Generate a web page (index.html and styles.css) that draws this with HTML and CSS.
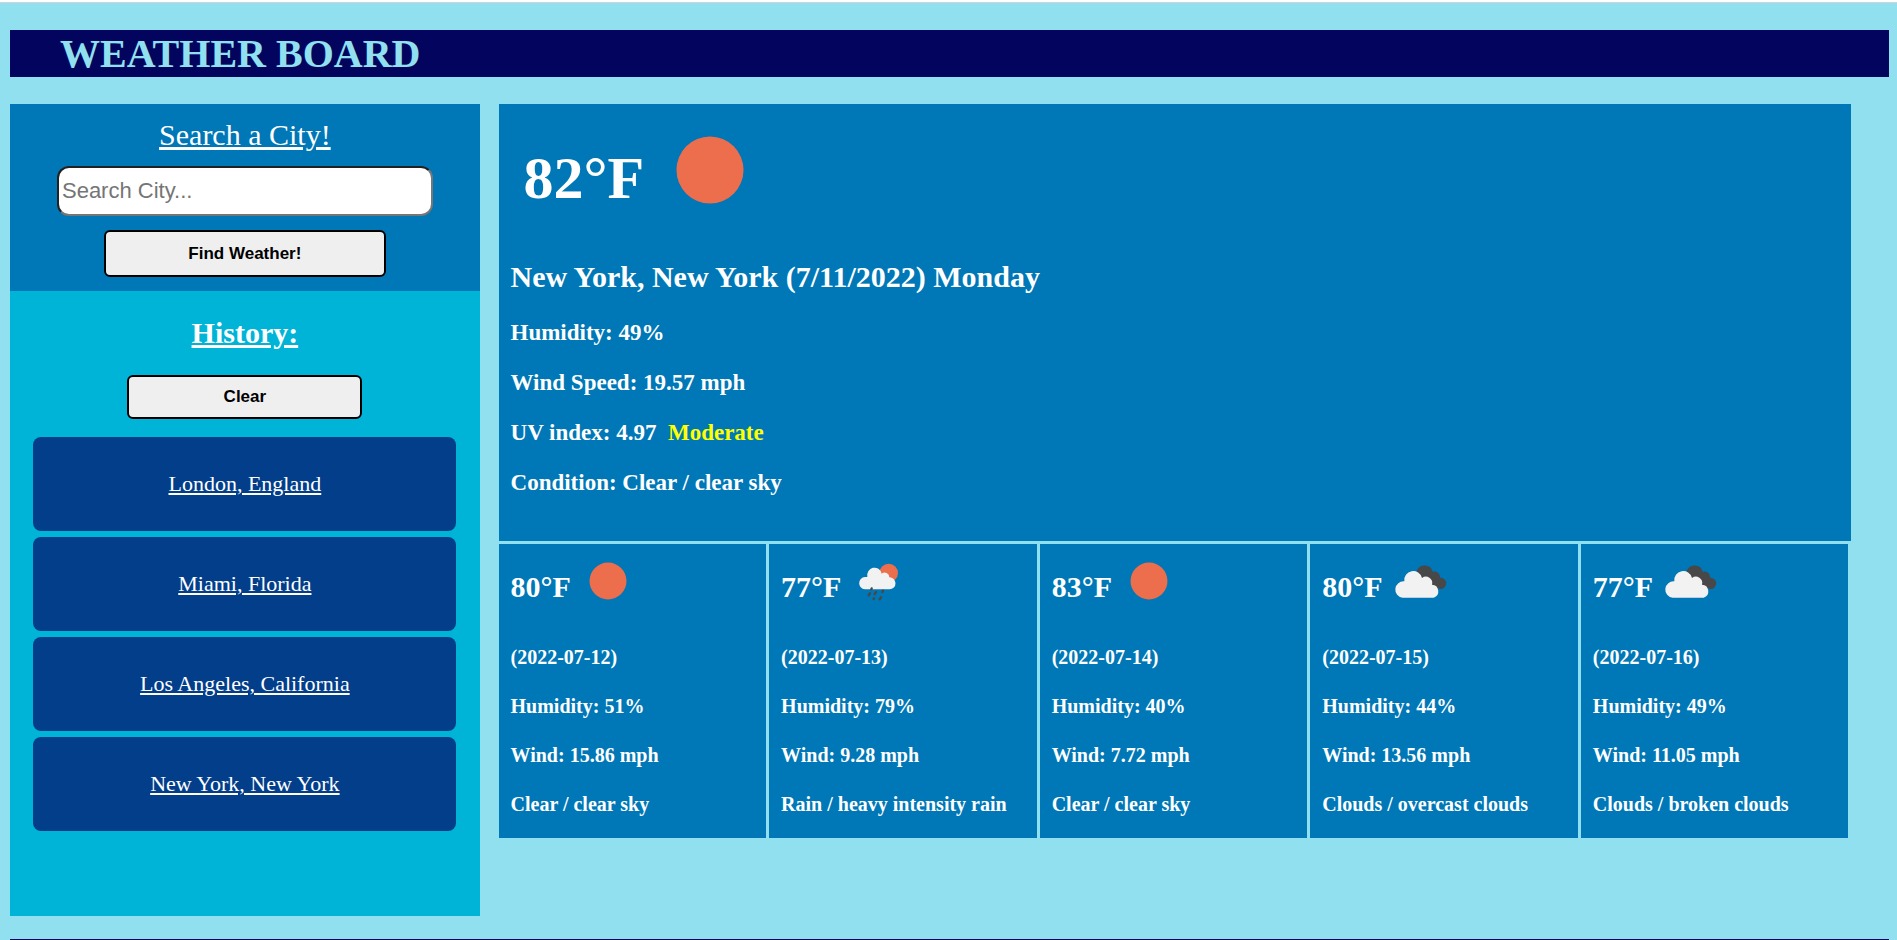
FILE: index.html
```html
<!DOCTYPE html>
<html lang="en">
<head>
<meta charset="utf-8">
<meta name="viewport" content="width=device-width, initial-scale=1">
<title>Weather Board</title>
<link rel="stylesheet" href="styles.css">
</head>
<body>
<svg class="sprite" aria-hidden="true">
  <symbol id="sun" viewBox="0 0 64 64">
    <circle cx="32" cy="32" r="18.5" fill="#ec6e4c"/>
  </symbol>
  <symbol id="rain" viewBox="17 -3 192 192">
    <circle cx="145" cy="69" r="28" fill="#ec6e4c"/>
    <path d="M76 118a18 18 0 0 1-2-37h7a22 23 0 0 1 43-10 14 14 0 0 1 23 11 18 18 0 0 1 1 36z" fill="#f2f2f2"/>
    <path d="M94 115l-1 3M89 130l-4 6M107 126l-4 6M128 122l-2 4M101 145l-1 2M122 142l-4 6" stroke="#484848" stroke-width="7" stroke-linecap="round"/>
  </symbol>
  <symbol id="clouds" viewBox="23 -3 192 192">
    <path d="M109 64a25 25 0 0 1 48 1 17 17 0 0 1 22 18 17 17 0 1 1-6 32l-52-20z" fill="#484848"/>
    <path d="M67 143a24 24 0 0 1 5-49 27 27 0 0 1 53-10 19 19 0 0 1 30 20 20 20 0 0 1 5 39z" fill="#f2f2f2"/>
  </symbol>
</svg>
<div class="edge"></div>
<div class="page">
  <header class="banner"><h1>WEATHER BOARD</h1></header>
  <div class="board">
    <aside class="sidebar">
      <form class="search">
        <label for="city">Search a City!</label>
        <input id="city" type="text" placeholder="Search City...">
        <button type="button" class="find">Find Weather!</button>
      </form>
      <section class="history">
        <h2>History:</h2>
        <button type="button" class="clear">Clear</button>
        <nav class="cities">
          <a href="#">London, England</a>
          <a href="#">Miami, Florida</a>
          <a href="#">Los Angeles, California</a>
          <a href="#">New York, New York</a>
        </nav>
      </section>
    </aside>
    <main class="weather">
      <section class="today">
        <div class="now"><span>82°F</span><svg><use href="#sun"/></svg></div>
        <h2>New York, New York (7/11/2022) Monday</h2>
        <p>Humidity: 49%</p>
        <p>Wind Speed: 19.57 mph</p>
        <p>UV index: 4.97&nbsp; <span class="moderate">Moderate</span></p>
        <p>Condition: Clear / clear sky</p>
      </section>
      <section class="forecast">
        <article class="day">
          <h3>80°F<svg><use href="#sun"/></svg></h3>
          <p>(2022-07-12)</p><p>Humidity: 51%</p><p>Wind: 15.86 mph</p><p>Clear / clear sky</p>
        </article>
        <article class="day">
          <h3>77°F<svg><use href="#rain"/></svg></h3>
          <p>(2022-07-13)</p><p>Humidity: 79%</p><p>Wind: 9.28 mph</p><p>Rain / heavy intensity rain</p>
        </article>
        <article class="day">
          <h3>83°F<svg><use href="#sun"/></svg></h3>
          <p>(2022-07-14)</p><p>Humidity: 40%</p><p>Wind: 7.72 mph</p><p>Clear / clear sky</p>
        </article>
        <article class="day">
          <h3>80°F<svg><use href="#clouds"/></svg></h3>
          <p>(2022-07-15)</p><p>Humidity: 44%</p><p>Wind: 13.56 mph</p><p>Clouds / overcast clouds</p>
        </article>
        <article class="day">
          <h3>77°F<svg><use href="#clouds"/></svg></h3>
          <p>(2022-07-16)</p><p>Humidity: 49%</p><p>Wind: 11.05 mph</p><p>Clouds / broken clouds</p>
        </article>
      </section>
    </main>
  </div>
  <footer class="footer"></footer>
</div>
</body>
</html>
```
FILE: styles.css
```css
* {
  box-sizing: border-box;
}

body {
  margin: 0;
  background: #90e0ef;
  color: #fff;
  font-family: "Liberation Serif", "Times New Roman", serif;
}

h1, h2, h3, p {
  margin: 0;
}

.sprite {
  display: none;
}

.edge {
  height: 3px;
  background: #fff;
  border-bottom: 1px solid #d3d3d3;
}

.page {
  padding: 27px 8px 0 10px;
}

.banner {
  background: #03045e;
  color: #90e0ef;
  padding-left: 50px;
}

.banner h1 {
  font-size: 40px;
  line-height: 47px;
}

.board {
  display: flex;
  align-items: flex-start;
  gap: 1%;
  margin-top: 27px;
}

.sidebar {
  width: 25%;
}

.search {
  display: flex;
  flex-direction: column;
  align-items: center;
  background: #0077b6;
  padding: 14px 0;
}

.search label {
  font-size: 30px;
  line-height: 34px;
  text-decoration: underline;
}

.search input {
  width: 80%;
  height: 50px;
  margin: 14px 0;
  padding: 0 3px;
  border: 2px inset #767676;
  border-radius: 12px;
  background: #fff;
  font-family: "Liberation Sans", Arial, sans-serif;
  font-size: 22px;
}

.search input::placeholder {
  color: #757575;
}

.find, .clear {
  border: 2px solid #000;
  border-radius: 6px;
  background: #efefef;
  color: #000;
  font-family: "Liberation Sans", Arial, sans-serif;
  font-size: 17px;
  font-weight: bold;
}

.find {
  width: 60%;
  height: 47px;
}

.history {
  display: flex;
  flex-direction: column;
  align-items: center;
  background: #00b4d8;
  padding: 25px 0 85px;
}

.history h2 {
  font-size: 30px;
  line-height: 34px;
  text-decoration: underline;
}

.clear {
  width: 50%;
  height: 44px;
  margin: 25px 0 18px;
}

.cities {
  display: flex;
  flex-direction: column;
  gap: 6px;
  width: 90%;
}

.cities a {
  border-radius: 8px;
  background: #023e8a;
  color: #fff;
  font-size: 22px;
  line-height: 94px;
  text-align: center;
}

.weather {
  width: 72%;
}

.today {
  background: #0077b6;
  padding: 10px 12px 33px;
  font-size: 23px;
  font-weight: bold;
}

.now {
  display: flex;
  align-items: center;
  height: 112px;
  padding-left: 13px;
  font-size: 60px;
  line-height: 68px;
}

.now span {
  padding-top: 16px;
}

.now svg {
  width: 116px;
  height: 116px;
  margin-left: 8px;
}

.today h2 {
  margin: 34px 0 14px;
  font-size: 30px;
  line-height: 34px;
}

.today p {
  line-height: 26px;
  padding: 12px 0;
}

.moderate {
  color: #ff0;
}

.forecast {
  display: grid;
  grid-template-columns: repeat(5, 1fr);
  gap: 3px;
  padding: 3px 3px 0 0;
}

.day {
  background: #0077b6;
  padding: 5px 12px 9px;
  font-weight: bold;
}

.day h3 {
  display: flex;
  height: 64px;
  margin-bottom: 20px;
  font-size: 30px;
  line-height: 76px;
}

.day svg {
  width: 64px;
  height: 64px;
  margin-left: 5px;
}

.day p {
  font-size: 20px;
  line-height: 49px;
}

.footer {
  margin-top: 23px;
  border-top: 1px solid #03045e;
}
```
